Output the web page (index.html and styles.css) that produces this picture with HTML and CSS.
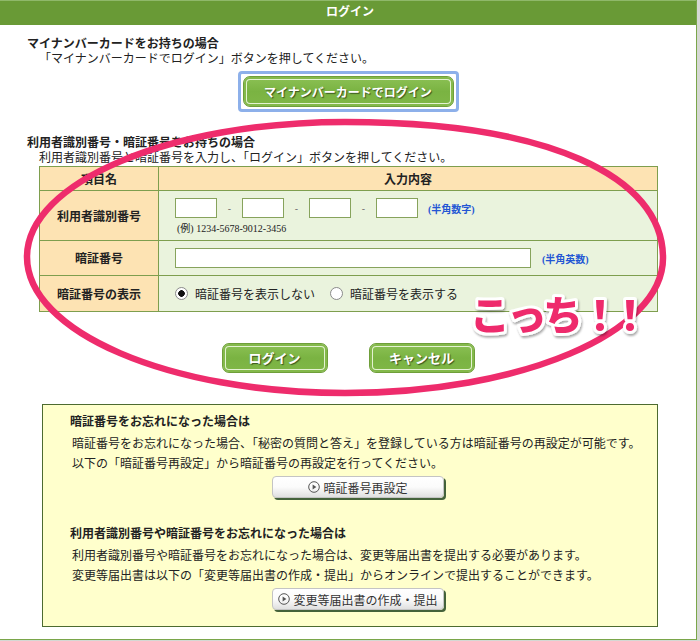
FILE: index.html
```html
<!DOCTYPE html>
<html lang="ja">
<head>
<meta charset="utf-8">
<title>ログイン</title>
<link rel="stylesheet" href="styles.css">
</head>
<body>
<div class="panel">
  <div class="hdr">ログイン</div>

  <div class="block sec1">
    <p class="ttl">マイナンバーカードをお持ちの場合</p>
    <p class="desc">「マイナンバーカードでログイン」ボタンを押してください。</p>
  </div>
  <div class="ringrow">
    <div class="ring"><button class="gbtn wide">マイナンバーカードでログイン</button></div>
  </div>

  <div class="block sec2">
    <p class="ttl">利用者識別番号・暗証番号をお持ちの場合</p>
    <p class="desc d2">利用者識別番号と暗証番号を入力し、「ログイン」ボタンを押してください。</p>
  </div>

  <table class="tbl">
    <tr class="rh">
      <th class="c1">項目名</th>
      <th class="c2h">入力内容</th>
    </tr>
    <tr class="r1">
      <th class="c1">利用者識別番号</th>
      <td class="c2">
        <div class="idrow">
          <input class="box" type="text"><span class="dash">-</span><input class="box" type="text"><span class="dash">-</span><input class="box" type="text"><span class="dash">-</span><input class="box" type="text"><span class="note">(半角数字)</span>
        </div>
        <div class="ex">(例)&nbsp;1234-5678-9012-3456</div>
      </td>
    </tr>
    <tr class="r2">
      <th class="c1">暗証番号</th>
      <td class="c2">
        <div class="pwrow"><input class="pw" type="password"><span class="note n2">(半角英数)</span></div>
      </td>
    </tr>
    <tr class="r3">
      <th class="c1">暗証番号の表示</th>
      <td class="c2">
        <div class="radrow">
          <label class="opt"><input class="rad" type="radio" name="show" checked><span>暗証番号を表示しない</span></label>
          <label class="opt o2"><input class="rad" type="radio" name="show"><span>暗証番号を表示する</span></label>
        </div>
      </td>
    </tr>
  </table>

  <div class="btnrow">
    <button class="gbtn">ログイン</button>
    <button class="gbtn">キャンセル</button>
  </div>

  <div class="ybox">
    <p class="ttl">暗証番号をお忘れになった場合は</p>
    <p class="ydesc first">暗証番号をお忘れになった場合、「秘密の質問と答え」を登録している方は暗証番号の再設定が可能です。</p>
    <p class="ydesc">以下の「暗証番号再設定」から暗証番号の再設定を行ってください。</p>
    <button class="wbtn"><svg class="ico" width="12" height="12" viewBox="0 0 12 12"><circle cx="6" cy="6" r="5.3" fill="none" stroke="#555" stroke-width="1"/><path d="M4.6 3.6 L8.4 6 L4.6 8.4 Z" fill="#555"/></svg><span>暗証番号再設定</span></button>

    <p class="ttl t2">利用者識別番号や暗証番号をお忘れになった場合は</p>
    <p class="ydesc first">利用者識別番号や暗証番号をお忘れになった場合は、変更等届出書を提出する必要があります。</p>
    <p class="ydesc">変更等届出書は以下の「変更等届出書の作成・提出」からオンラインで提出することができます。</p>
    <button class="wbtn"><svg class="ico" width="12" height="12" viewBox="0 0 12 12"><circle cx="6" cy="6" r="5.3" fill="none" stroke="#555" stroke-width="1"/><path d="M4.6 3.6 L8.4 6 L4.6 8.4 Z" fill="#555"/></svg><span>変更等届出書の作成・提出</span></button>
  </div>
</div>

<svg class="overlay" width="700" height="641" viewBox="0 0 700 641">
  <defs>
    <filter id="sh" x="-10%" y="-20%" width="130%" height="160%">
      <feDropShadow dx="1" dy="2" stdDeviation="1.2" flood-color="#000" flood-opacity="0.35"/>
    </filter>
  </defs>
  <path class="loop" d="M 27 257 C 27 182, 170 122, 345 122 C 548 122, 663 176, 663 258 C 663 333, 521 393, 345 393 C 169 393, 27 332, 27 257 Z"/>
  <text class="kocchi" x="470 507 543 580 610" y="330" filter="url(#sh)">こっち！！</text>
</svg>
</body>
</html>
```

FILE: styles.css
```css
* { box-sizing: border-box; }
html, body { margin: 0; padding: 0; }
body {
  width: 700px;
  height: 641px;
  background: #d6d8d4;
  font-family: "Liberation Serif", "Noto Sans CJK JP", serif;
  font-size: 12px;
  color: #222;
  position: relative;
  overflow: hidden;
}
p { margin: 0; }

.panel {
  width: 697px;
  height: 640px;
  background: #fff;
  border-right: 1px solid #7aa64a;
  border-bottom: 1px solid #7aa64a;
}
.hdr {
  height: 25px;
  background: #699a36;
  border-top: 1px solid #8fb86a;
  color: #fff;
  font-weight: bold;
  text-align: center;
  line-height: 23px;
  font-size: 12px;
  padding-left: 4px;
}

.block { padding-left: 27px; }
.sec1 { padding-top: 12px; }
.ttl { font-weight: bold; line-height: 15px; }
.desc { padding-left: 12px; line-height: 15px; }
.d2 { line-height: 14px; }
.sec2 { padding-top: 24px; }

.ringrow { display: flex; justify-content: center; margin-top: 4px; }
.ring {
  border: 3px solid #8db0ea;
  border-radius: 4px;
  padding: 2px;
  display: flex;
}

.gbtn {
  width: 106px;
  height: 30px;
  border: 1px solid #6f9f3a;
  border-radius: 7px;
  background: linear-gradient(#8cc155, #7ab342 50%, #80b747);
  box-shadow: inset 0 0 0 2px #84b94b, inset 0 0 0 3px #e4f2d2;
  color: #fff;
  font-family: "Noto Sans CJK JP", sans-serif;
  font-weight: bold;
  font-size: 13px;
  text-shadow: 1px 1px 1px rgba(40, 60, 20, 0.8);
  padding: 0;
  line-height: 28px;
}
.gbtn.wide { width: 211px; height: 31px; font-size: 12px; line-height: 29px; }

.tbl {
  margin: 1px 0 0 39px;
  width: 619px;
  border-collapse: collapse;
  border: 1px solid #7e9e4e;
}
.tbl th, .tbl td { border: 1px solid #7e9e4e; padding: 0; }
.tbl th.c1 {
  width: 119px;
  background: #fde3b3;
  font-weight: bold;
  text-align: center;
}
.tbl th.c2h { background: #fde3b3; font-weight: bold; text-align: center; }
.tbl td.c2 { background: #eaf3dd; padding-left: 16px; }
.rh { height: 24px; }
.r1 { height: 50px; }
.r2 { height: 35px; }
.r3 { height: 36px; }

.idrow { display: flex; align-items: center; padding-top: 2px; }
.box, .pw {
  height: 20px;
  border: 1px solid #87a35c;
  background: #fff;
  padding: 0 2px;
  margin: 0;
  font-size: 12px;
  outline: none;
}
.box { width: 42px; }
.pw { width: 356px; }
.dash { width: 25px; text-align: center; color: #777; font-size: 10px; font-family: "Liberation Sans", sans-serif; }
.note {
  color: #2356d4;
  font-size: 10px;
  font-weight: bold;
  margin-left: 10px;
}
.n2 { margin-left: 11px; }
.ex { font-size: 10px; margin-top: 5px; line-height: 12px; padding-left: 2px; }
.pwrow { display: flex; align-items: center; }

.radrow { display: flex; align-items: center; }
.opt { display: flex; align-items: center; }
.opt span { margin-left: 7px; }
.o2 { margin-left: 15px; }
.rad {
  appearance: none;
  -webkit-appearance: none;
  width: 13px;
  height: 13px;
  margin: 0;
  border: 1px solid #8a8a8a;
  border-radius: 50%;
  background: #fff;
}
.rad:checked { background: radial-gradient(circle, #111 0 3px, #fff 3.6px); }

.btnrow { display: flex; justify-content: center; gap: 41px; margin-top: 31px; }

.ybox {
  margin: 31px 0 0 42px;
  width: 616px;
  height: 223px;
  background: #ffffcc;
  border: 1px solid #4d6b30;
  padding: 10px 0 0 27px;
}
.ydesc { line-height: 20px; margin-left: 2px; }
.ydesc.first { margin-top: 4px; }
.t2 { margin-top: 29px; }

.wbtn {
  display: flex;
  align-items: center;
  justify-content: center;
  width: 172px;
  height: 22px;
  margin: 2px 0 0 202px;
  padding: 0;
  border: 1px solid #c4c4c4;
  border-radius: 4px;
  background: linear-gradient(#ffffff, #fbfbfb 50%, #e0e0e0);
  box-shadow: 2px 2px 0 #44623a;
  font-family: "Noto Sans CJK JP", sans-serif;
  font-size: 12px;
  color: #333;
}
.wbtn .ico { margin-right: 3px; }

.overlay {
  position: absolute;
  left: 0;
  top: 0;
  pointer-events: none;
}
.loop { fill: none; stroke: #ee2c6c; stroke-width: 6.5; }
.kocchi {
  font-family: "Noto Sans CJK JP", sans-serif;
  font-weight: 900;
  font-size: 40px;
  fill: #ee2c6c;
  stroke: #fff;
  stroke-width: 6;
  stroke-linejoin: round;
  paint-order: stroke fill;
}
```
